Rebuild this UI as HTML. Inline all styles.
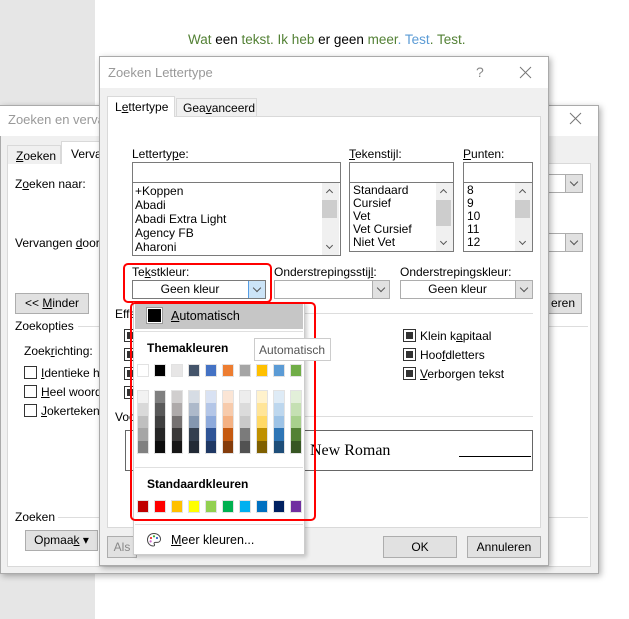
<!DOCTYPE html>
<html><head><meta charset="utf-8"><style>
*{box-sizing:border-box;margin:0;padding:0}
body{width:629px;height:619px;position:relative;overflow:hidden;background:#fff;font-family:"Liberation Sans",sans-serif;font-size:12px;color:#000}
.a{position:absolute}
.t{position:absolute;white-space:nowrap;line-height:14px}
.btn{position:absolute;background:#e1e1e1;border:1px solid #adadad;text-align:center;line-height:19px}
.box{position:absolute;background:#fff;border:1px solid #7a7a7a}
.cb{position:absolute;width:13px;height:13px;border:1px solid #333;background:#fff}
.cbf::after{content:"";position:absolute;left:2px;top:2px;width:7px;height:7px;background:#333}
.dd{position:absolute;background:#fff;border:1px solid #adadad;text-align:center;line-height:17px}
.chev{position:absolute;right:0;top:0;width:17px;height:100%;background:#e1e1e1;border-left:1px solid #adadad}
.chev::after{content:"";position:absolute;left:5px;top:4px;width:5px;height:5px;border-right:1px solid #555;border-bottom:1px solid #555;transform:rotate(45deg)}
.up,.dn{position:absolute;width:5px;height:5px;border-right:1px solid #555;border-bottom:1px solid #555}
.up{transform:rotate(-135deg)}.dn{transform:rotate(45deg)}
u{text-decoration:underline}
.sw{position:absolute;width:12px;height:13px;border:1px solid #e2e2e2}
.col{position:absolute;width:12px;top:390px;height:64px;border:1px solid #e2e2e2}
.col div{height:12.4px}
</style></head><body>
<div class="a" style="left:0;top:0;width:95px;height:619px;background:#e6e6e6"></div>
<div class="t" style="left:188px;top:33px;font-size:13.5px;color:#538135">Wat <span style="color:#000">een</span> tekst. Ik heb <span style="color:#000">er geen</span> meer<span style="color:#5b9bd5">. Test</span>. Test.</div>

<!-- back dialog -->
<div class="a" style="left:0;top:105px;width:599px;height:469px;background:#f0f0f0;border:1px solid #aaa;box-shadow:2px 2px 6px rgba(0,0,0,.3)"></div>
<div class="a" style="left:0;top:106px;width:598px;height:30px;background:#fff"></div>
<div class="t" style="left:8px;top:113px;font-size:13px;color:#999">Zoeken en vervangen</div>
<svg class="a" style="left:569px;top:112px" width="13" height="13"><path d="M1 1L12 12M12 1L1 12" stroke="#777" stroke-width="1"/></svg>
<div class="a" style="left:7px;top:163px;width:584px;height:404px;background:#fff;border:1px solid #d9d9d9"></div>
<div class="a" style="left:7px;top:145px;width:54px;height:19px;background:#f0f0f0;border:1px solid #d9d9d9;border-bottom:none"></div>
<div class="t" style="left:16px;top:149px"><u>Z</u>oeken</div>
<div class="a" style="left:61px;top:141px;width:60px;height:23px;background:#fff;border:1px solid #d9d9d9;border-bottom:none"></div>
<div class="t" style="left:71px;top:147px">Vervangen</div>
<div class="t" style="left:15px;top:177px">Z<u>o</u>eken naar:</div>
<div class="t" style="left:15px;top:236px">Vervangen <u>d</u>oor:</div>
<div class="dd" style="left:530px;top:174px;width:53px;height:19px"><div class="chev"></div></div>
<div class="dd" style="left:530px;top:233px;width:53px;height:19px"><div class="chev"></div></div>
<div class="btn" style="left:15px;top:293px;width:74px;height:21px">&lt;&lt; <u>M</u>inder</div>
<div class="btn" style="left:520px;top:293px;width:62px;height:21px;text-align:right;padding-right:6px">eren</div>
<div class="t" style="left:15px;top:319px">Zoekopties</div>
<div class="a" style="left:78px;top:326px;width:510px;height:1px;background:#ddd"></div>
<div class="t" style="left:24px;top:344px">Zoek<u>r</u>ichting:</div>
<div class="cb" style="left:24px;top:366px"></div><div class="t" style="left:41px;top:366px"><u>I</u>dentieke hoofdletters</div>
<div class="cb" style="left:24px;top:385px"></div><div class="t" style="left:41px;top:385px"><u>H</u>eel woord</div>
<div class="cb" style="left:24px;top:404px"></div><div class="t" style="left:41px;top:404px"><u>J</u>okertekens</div>
<div class="t" style="left:15px;top:510px">Zoeken</div>
<div class="a" style="left:58px;top:517px;width:530px;height:1px;background:#ddd"></div>
<div class="btn" style="left:25px;top:530px;width:73px;height:21px">Opmaa<u>k</u> ▾</div>

<!-- front dialog -->
<div class="a" style="left:99px;top:56px;width:450px;height:510px;background:#f0f0f0;border:1px solid #aaa;box-shadow:2px 2px 6px rgba(0,0,0,.3)"></div>
<div class="a" style="left:100px;top:57px;width:448px;height:31px;background:#fff"></div>
<div class="t" style="left:108px;top:66px;font-size:13px;color:#999">Zoeken Lettertype</div>
<div class="t" style="left:476px;top:65px;font-size:14px;color:#888">?</div>
<svg class="a" style="left:519px;top:66px" width="13" height="13"><path d="M1 1L12 12M12 1L1 12" stroke="#777" stroke-width="1"/></svg>
<div class="a" style="left:107px;top:116px;width:434px;height:412px;background:#fff;border:1px solid #d9d9d9"></div>
<div class="a" style="left:107px;top:96px;width:68px;height:21px;background:#fff;border:1px solid #d9d9d9;border-bottom:none"></div>
<div class="t" style="left:115px;top:100px">L<u>e</u>ttertype</div>
<div class="a" style="left:176px;top:98px;width:81px;height:18px;background:#f0f0f0;border:1px solid #d9d9d9;border-bottom:none"></div>
<div class="t" style="left:183px;top:101px">Gea<u>v</u>anceerd</div>

<div class="t" style="left:132px;top:147px">Letterty<u>p</u>e:</div>
<div class="box" style="left:132px;top:162px;width:209px;height:21px"></div>
<div class="box" style="left:132px;top:182px;width:209px;height:74px"></div>
<div class="t" style="left:135px;top:184px;line-height:14px">+Koppen<br>Abadi<br>Abadi Extra Light<br>Agency FB<br>Aharoni</div>
<div class="a" style="left:322px;top:183px;width:17px;height:72px;background:#f0f0f0"></div>
<div class="a" style="left:322px;top:200px;width:15px;height:18px;background:#cdcdcd"></div>
<div class="up" style="left:327px;top:190px"></div><div class="dn" style="left:327px;top:243px"></div>

<div class="t" style="left:349px;top:147px"><u>T</u>ekenstijl:</div>
<div class="box" style="left:349px;top:162px;width:105px;height:21px"></div>
<div class="box" style="left:349px;top:182px;width:105px;height:70px"></div>
<div class="t" style="left:353px;top:184px;line-height:13px">Standaard<br>Cursief<br>Vet<br>Vet Cursief<br>Niet Vet</div>
<div class="a" style="left:436px;top:183px;width:17px;height:68px;background:#f0f0f0"></div>
<div class="a" style="left:436px;top:200px;width:15px;height:26px;background:#cdcdcd"></div>
<div class="up" style="left:441px;top:190px"></div><div class="dn" style="left:441px;top:239px"></div>

<div class="t" style="left:463px;top:147px"><u>P</u>unten:</div>
<div class="box" style="left:463px;top:162px;width:70px;height:21px"></div>
<div class="box" style="left:463px;top:182px;width:70px;height:70px"></div>
<div class="t" style="left:467px;top:184px;line-height:13px">8<br>9<br>10<br>11<br>12</div>
<div class="a" style="left:515px;top:183px;width:17px;height:68px;background:#f0f0f0"></div>
<div class="a" style="left:515px;top:200px;width:15px;height:18px;background:#cdcdcd"></div>
<div class="up" style="left:520px;top:190px"></div><div class="dn" style="left:520px;top:239px"></div>

<div class="t" style="left:132px;top:265px">Te<u>k</u>stkleur:</div>
<div class="dd" style="left:132px;top:280px;width:134px;height:19px;border-color:#7a7a7a;padding-right:18px">Geen kleur<div class="chev" style="background:#cce4f7;border-left:1px solid #569de5"></div></div>
<div class="a" style="left:123px;top:263px;width:149px;height:40px;border:2px solid #f00;border-radius:5px"></div>
<div class="t" style="left:274px;top:265px">Onderstrepingsstij<u>l</u>:</div>
<div class="dd" style="left:274px;top:280px;width:116px;height:19px"><div class="chev"></div></div>
<div class="t" style="left:400px;top:265px">Onderstrepin<u>g</u>skleur:</div>
<div class="dd" style="left:400px;top:280px;width:133px;height:19px;padding-right:18px">Geen kleur<div class="chev"></div></div>

<div class="t" style="left:115px;top:307px">Effecten</div>
<div class="a" style="left:165px;top:313px;width:368px;height:1px;background:#ddd"></div>
<div class="cb cbf" style="left:124px;top:329px"></div>
<div class="cb cbf" style="left:124px;top:348px"></div>
<div class="cb cbf" style="left:124px;top:367px"></div>
<div class="cb cbf" style="left:124px;top:386px"></div>
<div class="cb cbf" style="left:403px;top:329px"></div><div class="t" style="left:420px;top:329px">Klein k<u>a</u>pitaal</div>
<div class="cb cbf" style="left:403px;top:348px"></div><div class="t" style="left:420px;top:348px">Hoo<u>f</u>dletters</div>
<div class="cb cbf" style="left:403px;top:367px"></div><div class="t" style="left:420px;top:367px"><u>V</u>erborgen tekst</div>
<div class="t" style="left:115px;top:410px">Voorbeeld</div>
<div class="a" style="left:175px;top:416px;width:358px;height:1px;background:#ddd"></div>
<div class="a" style="left:125px;top:430px;width:408px;height:41px;border:1px solid #666;background:#fff"></div>
<div class="t" style="left:310px;top:442px;font-family:'Liberation Serif',serif;font-size:16px;line-height:18px">New Roman</div>
<div class="a" style="left:459px;top:456px;width:72px;height:1px;background:#000"></div>
<div class="btn" style="left:383px;top:536px;width:74px;height:22px;line-height:20px">OK</div>
<div class="btn" style="left:467px;top:536px;width:74px;height:22px;line-height:20px">Annuleren</div>
<div class="btn" style="left:107px;top:536px;width:30px;height:22px;line-height:20px;color:#888">Als</div>

<!-- color dropdown -->
<div class="a" style="left:133px;top:302px;width:172px;height:253px;background:#fff;border:1px solid #ccc;box-shadow:2px 2px 4px rgba(0,0,0,.2)"></div>
<div class="a" style="left:135px;top:304px;width:168px;height:25px;background:#c6c6c6"></div>
<div class="a" style="left:147px;top:308px;width:15px;height:15px;background:#000;border:1px solid #fff;outline:1px solid #999"></div>
<div class="t" style="left:171px;top:309px;font-size:12.5px"><u>A</u>utomatisch</div>
<div class="a" style="left:135px;top:331px;width:168px;height:1px;background:#e0e0e0"></div>
<div class="t" style="left:147px;top:341px;font-weight:bold">Themakleuren</div>
<div class="sw" style="left:137px;top:364px;background:#fff"></div>
<div class="sw" style="left:154px;top:364px;background:#000"></div>
<div class="sw" style="left:171px;top:364px;background:#e7e6e6"></div>
<div class="sw" style="left:188px;top:364px;background:#44546a"></div>
<div class="sw" style="left:205px;top:364px;background:#4472c4"></div>
<div class="sw" style="left:222px;top:364px;background:#ed7d31"></div>
<div class="sw" style="left:239px;top:364px;background:#a5a5a5"></div>
<div class="sw" style="left:256px;top:364px;background:#ffc000"></div>
<div class="sw" style="left:273px;top:364px;background:#5b9bd5"></div>
<div class="sw" style="left:290px;top:364px;background:#70ad47"></div>
<div class="col" style="left:137px"><div style="background:#f2f2f2"></div><div style="background:#d9d9d9"></div><div style="background:#bfbfbf"></div><div style="background:#a6a6a6"></div><div style="background:#808080"></div></div>
<div class="col" style="left:154px"><div style="background:#7f7f7f"></div><div style="background:#595959"></div><div style="background:#404040"></div><div style="background:#262626"></div><div style="background:#0d0d0d"></div></div>
<div class="col" style="left:171px"><div style="background:#d0cece"></div><div style="background:#aeaaaa"></div><div style="background:#757171"></div><div style="background:#3a3838"></div><div style="background:#171616"></div></div>
<div class="col" style="left:188px"><div style="background:#d6dce4"></div><div style="background:#adb9ca"></div><div style="background:#8497b0"></div><div style="background:#333f4f"></div><div style="background:#222a35"></div></div>
<div class="col" style="left:205px"><div style="background:#d9e2f3"></div><div style="background:#b4c6e7"></div><div style="background:#8eaadb"></div><div style="background:#2f5496"></div><div style="background:#1f3864"></div></div>
<div class="col" style="left:222px"><div style="background:#fbe5d5"></div><div style="background:#f7cbac"></div><div style="background:#f4b183"></div><div style="background:#c55a11"></div><div style="background:#843c0c"></div></div>
<div class="col" style="left:239px"><div style="background:#ededed"></div><div style="background:#dbdbdb"></div><div style="background:#c9c9c9"></div><div style="background:#7b7b7b"></div><div style="background:#525252"></div></div>
<div class="col" style="left:256px"><div style="background:#fff2cc"></div><div style="background:#ffe599"></div><div style="background:#ffd966"></div><div style="background:#bf9000"></div><div style="background:#7f6000"></div></div>
<div class="col" style="left:273px"><div style="background:#deebf6"></div><div style="background:#bdd7ee"></div><div style="background:#9dc3e6"></div><div style="background:#2e75b5"></div><div style="background:#1e4e79"></div></div>
<div class="col" style="left:290px"><div style="background:#e2efd9"></div><div style="background:#c5e0b3"></div><div style="background:#a8d08d"></div><div style="background:#538135"></div><div style="background:#375623"></div></div>
<div class="a" style="left:135px;top:467px;width:168px;height:1px;background:#e0e0e0"></div>
<div class="t" style="left:147px;top:477px;font-weight:bold">Standaardkleuren</div>
<div class="sw" style="left:137px;top:500px;background:#c00000"></div>
<div class="sw" style="left:154px;top:500px;background:#ff0000"></div>
<div class="sw" style="left:171px;top:500px;background:#ffc000"></div>
<div class="sw" style="left:188px;top:500px;background:#ffff00"></div>
<div class="sw" style="left:205px;top:500px;background:#92d050"></div>
<div class="sw" style="left:222px;top:500px;background:#00b050"></div>
<div class="sw" style="left:239px;top:500px;background:#00b0f0"></div>
<div class="sw" style="left:256px;top:500px;background:#0070c0"></div>
<div class="sw" style="left:273px;top:500px;background:#002060"></div>
<div class="sw" style="left:290px;top:500px;background:#7030a0"></div>
<div class="a" style="left:130px;top:302px;width:186px;height:219px;border:2px solid #f00;border-radius:5px"></div>
<div class="a" style="left:135px;top:524px;width:168px;height:1px;background:#e0e0e0"></div>
<svg class="a" style="left:146px;top:532px" width="16" height="16" viewBox="0 0 16 16"><path d="M8 1.5C4 1.5 1.5 4.3 1.5 7.8c0 3.5 2.6 6.2 5.8 6.2 1.3 0 1.6-1 1-1.8-.6-.8-.2-1.8 1-1.8h2c1.8 0 3.2-1.3 3.2-3.2C14.5 4 11.6 1.5 8 1.5z" fill="none" stroke="#444" stroke-width="1"/><circle cx="5" cy="6" r="1.1" fill="#e33"/><circle cx="8" cy="4.3" r="1.1" fill="#3a3"/><circle cx="11" cy="6" r="1.1" fill="#36c"/><circle cx="4.6" cy="9.4" r="1.1" fill="#c6c"/></svg>
<div class="t" style="left:171px;top:533px;font-size:12.5px"><u>M</u>eer kleuren...</div>

<!-- tooltip -->
<div class="a" style="left:254px;top:338px;width:77px;height:23px;background:#fff;border:1px solid #ccc"></div>
<div class="t" style="left:259px;top:343px;color:#555">Automatisch</div>
</body></html>
